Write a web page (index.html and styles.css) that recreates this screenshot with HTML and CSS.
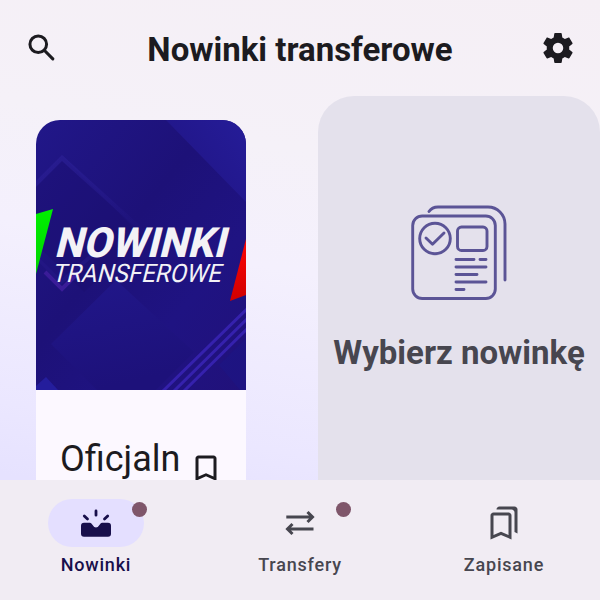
FILE: index.html
```html
<!DOCTYPE html>
<html lang="pl">
<head>
<meta charset="utf-8">
<title>Nowinki transferowe</title>
<link rel="stylesheet" href="styles.css">
</head>
<body>
<div class="app">
  <header class="topbar">
    <svg class="icon" viewBox="0 0 24 24"><circle cx="9.5" cy="9.5" r="5.55" fill="none" stroke="currentColor" stroke-width="2"/><path d="M14 14l5.2 5.2" fill="none" stroke="currentColor" stroke-width="2.1" stroke-linecap="round"/></svg>
    <h1 class="title">Nowinki transferowe</h1>
    <svg class="icon" viewBox="0 0 24 24"><path fill="currentColor" d="M19.5 12c0-.34-.03-.66-.07-.98l2.11-1.65c.19-.15.24-.42.12-.64l-2-3.46c-.12-.22-.39-.3-.61-.22l-2.49 1c-.52-.39-1.08-.73-1.69-.98l-.38-2.65A.49.49 0 0 0 14 2h-4c-.25 0-.46.18-.49.42l-.38 2.65c-.61.25-1.17.59-1.69.98l-2.49-1c-.23-.08-.49 0-.61.22l-2 3.46c-.13.22-.07.49.12.64l2.11 1.65c-.04.32-.07.65-.07.98s.03.66.07.98l-2.11 1.65c-.19.15-.24.42-.12.64l2 3.46c.12.22.39.3.61.22l2.49-1c.52.39 1.08.73 1.69.98l.38 2.65c.03.24.24.42.49.42h4c.25 0 .46-.18.49-.42l.38-2.65c.61-.25 1.17-.59 1.69-.98l2.49 1c.23.08.49 0 .61-.22l2-3.46c.12-.22.07-.49-.12-.64l-2.11-1.65c.04-.32.07-.64.07-.98zM12 15.500a3.500 3.500 0 1 1 0-7 3.500 3.500 0 0 1 0 7z"/></svg>
  </header>
  <main class="content">
    <article class="card">
      <svg class="cover" viewBox="0 0 210 270">
        <defs>
          <linearGradient id="base" x1="0" y1="0" x2="1" y2="1"><stop offset="0" stop-color="#211789"/><stop offset=".42" stop-color="#1d1178"/><stop offset=".7" stop-color="#1f1382"/><stop offset="1" stop-color="#21117a"/></linearGradient>
          <linearGradient id="corner" x1="1" y1="0" x2="0" y2=".8"><stop offset="0" stop-color="#251c98"/><stop offset="1" stop-color="#201484"/></linearGradient>
          <linearGradient id="diamond" x1="0" y1="0" x2=".3" y2="1"><stop offset="0" stop-color="#21178a"/><stop offset="1" stop-color="#1d117a"/></linearGradient>
          <linearGradient id="green" x1="0" y1="0" x2="0" y2="1"><stop offset="0" stop-color="#00f000"/><stop offset="1" stop-color="#00d400"/></linearGradient>
          <linearGradient id="red" x1="0" y1="0" x2="0" y2="1"><stop offset="0" stop-color="#ff0505"/><stop offset="1" stop-color="#d00000"/></linearGradient>
          <linearGradient id="fade" x1="0" y1="0" x2="1" y2="1"><stop offset="0" stop-color="#2c2098" stop-opacity=".75"/><stop offset="1" stop-color="#2c2098" stop-opacity="0"/></linearGradient>
        </defs>
        <rect width="210" height="270" fill="url(#base)"/>
        <path d="M130 0h80v82z" fill="url(#corner)"/>
        <path d="M0 62L26 36l82 82-60 54-48-48z" fill="#1a0e6b" opacity=".3"/>
        <path d="M0 61L26 35l84 76-4 2L26 41 0 67z" fill="url(#fade)"/>
        <path d="M80 160L15 224l46 46h59l38-38z" fill="url(#diamond)"/>
        <path d="M-5 132L25 162l36-31" fill="none" stroke="#261a89" stroke-width="4" opacity=".5"/>
        <path d="M9 152l17 17 17-17" fill="none" stroke="#3a1c98" stroke-width="4"/>
        <path d="M0 270v-4l10-9 12 13z" fill="#241d9c"/>
        <path d="M183 245l27-27v52h-6z" fill="#1d1685" opacity=".6"/>
        <path d="M127 271l85-83M138 271l74-73M148 271l64-63" fill="none" stroke="#3521ad" stroke-width="3"/>
        <path d="M0 94l17-5L0 154z" fill="url(#green)"/>
        <path d="M210 119v56l-16 6z" fill="url(#red)"/>
        <g fill="#f3f2f6" font-family="Roboto, Noto Sans, sans-serif">
          <text transform="translate(18 137.300) skewX(-14)" font-size="41.500" font-weight="800" textLength="171" lengthAdjust="spacingAndGlyphs">NOWINKI</text>
          <text transform="translate(15.500 162) skewX(-14)" font-size="25.500" font-weight="400" textLength="169" lengthAdjust="spacingAndGlyphs">TRANSFEROWE</text>
        </g>
      </svg>
      <div class="headline">
        <h2 class="headline-text">Oficjaln</h2>
        <svg class="bookmark" viewBox="0 0 24 24"><path fill="currentColor" d="M17 3H7c-1.100 0-2 .9-2 2v15l7-3.200 7 3.200V5c0-1.100-.9-2-2-2zm0 14l-5-2.180L7 17V5h10v12z"/></svg>
      </div>
    </article>
    <section class="placeholder">
      <svg class="news" viewBox="0 0 96 96" fill="none" stroke="#5b5496" stroke-width="2.900" stroke-linecap="round" stroke-linejoin="round">
        <path d="M18 6.500q3-4.500 9-4.500h50a17 17 0 0 1 17 17v56"/>
        <rect x="1.700" y="11" width="82.600" height="82.500" rx="9.500"/>
        <circle cx="24" cy="33.500" r="15.300"/>
        <path d="M15 33l6.500 6.300L33 28"/>
        <rect x="46.500" y="22" width="29.500" height="23.500" rx="4"/>
        <path d="M45 54.500h18M69 54.500h6M45 62h30M45 69.500h21M45 77h30M45 84.500h8"/>
      </svg>
      <p class="placeholder-text">Wybierz nowinkę</p>
    </section>
  </main>
  <nav class="navbar">
    <a class="tab active">
      <span class="pill">
        <svg class="icon" viewBox="0 0 36 36"><path fill="currentColor" d="M6 17.700h6q1.200 0 2.200 1.700Q16 22.500 18 22.500t3.800-3.100Q22.800 17.700 24 17.700h6q3 0 3 3v8q0 3-3 3H6q-3 0-3-3v-8q0-3 3-3z"/><path fill="none" stroke="currentColor" stroke-width="2.800" stroke-linecap="round" d="M18 6v4.200M6.300 10.900l3.200 3.200M29.700 10.900l-3.200 3.200"/></svg>
        <span class="dot"></span>
      </span>
      <span>Nowinki</span>
    </a>
    <a class="tab">
      <span class="pill">
        <svg class="icon" viewBox="0 0 36 36" fill="none" stroke="currentColor" stroke-width="3"><path d="M4.300 12H31M25.500 7l5 5-5 5M31.500 24H5M10.500 19l-5 5 5 5"/></svg>
        <span class="dot"></span>
      </span>
      <span>Transfery</span>
    </a>
    <a class="tab">
      <span class="pill">
        <svg class="icon" viewBox="0 0 24 24"><path fill="currentColor" d="M15 7v12.970l-4.210-1.810-.79-.34-.79.340L5 19.970V7h10m4-6H8.990C7.890 1 7 1.900 7 3h10c1.100 0 2 .9 2 2v13l2 1V3c0-1.100-.9-2-2-2zm-4 4H5c-1.100 0-2 .9-2 2v16l7-3 7 3V7c0-1.100-.9-2-2-2z"/></svg>
      </span>
      <span>Zapisane</span>
    </a>
  </nav>
</div>
</body>
</html>
```
FILE: styles.css
```css
* { box-sizing: border-box; }
body { margin: 0; font-family: Roboto, "Noto Sans", sans-serif; color: #1c1b20; }
h1, h2, p { margin: 0; }
svg { display: block; }
.app {
  width: 600px;
  height: 600px;
  display: flex;
  flex-direction: column;
  overflow: hidden;
  background: linear-gradient(190deg, #f5eff5 0, #f5f1f8 200px, #f4f0fd 320px, #ebe7ff 500px, #e6e2ff 570px);
}
.topbar {
  height: 96px;
  flex: none;
  display: flex;
  align-items: center;
  justify-content: space-between;
  padding: 0 24px;
}
.icon { width: 36px; height: 36px; flex: none; }
.title { font-size: 33px; line-height: 42px; font-weight: 700; padding-top: 3px; white-space: nowrap; }
.content {
  flex: 1;
  min-height: 0;
  display: flex;
  align-items: flex-start;
  gap: 72px;
  padding-left: 36px;
  overflow: hidden;
}
.card {
  width: 210px;
  height: 480px;
  margin-top: 24px;
  flex: none;
  overflow: hidden;
  border-radius: 24px;
  background: #fcf8ff;
}
.cover { width: 210px; height: 270px; }
.headline { display: flex; align-items: flex-start; justify-content: space-between; padding: 45px 22px 0 24px; }
.headline-text { font-size: 36px; line-height: 48px; font-weight: 400; white-space: nowrap; }
.bookmark { width: 36px; height: 36px; margin-top: 16px; flex: none; }
.placeholder {
  width: 282px;
  height: 504px;
  flex: none;
  display: flex;
  flex-direction: column;
  align-items: center;
  padding-top: 109px;
  border-radius: 36px;
  background: #e4e1ec;
}
.news { width: 96px; height: 96px; }
.placeholder-text { margin-top: 31px; font-size: 33px; line-height: 42px; font-weight: 700; color: #47464f; white-space: nowrap; }
.navbar {
  height: 120px;
  flex: none;
  display: grid;
  grid-template-columns: 192px 192px 192px;
  column-gap: 12px;
  background: #f1ecf3;
  color: #47464f;
}
.tab {
  display: flex;
  flex-direction: column;
  align-items: center;
  gap: 6px;
  padding-top: 19px;
  font-size: 18px;
  line-height: 24px;
  font-weight: 500;
  letter-spacing: .8px;
}
.tab.active { color: #180f4b; }
.pill {
  position: relative;
  width: 96px;
  height: 48px;
  display: flex;
  align-items: center;
  justify-content: center;
  border-radius: 24px;
}
.active .pill { background: #e4dfff; }
.dot {
  position: absolute;
  top: 3px;
  right: -3px;
  width: 15px;
  height: 15px;
  border-radius: 50%;
  background: #7f566a;
}
```
